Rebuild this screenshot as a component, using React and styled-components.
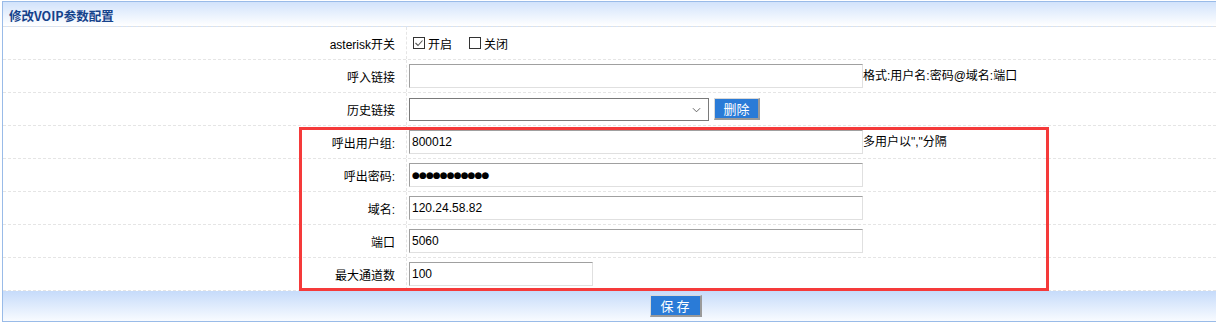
import { useState } from "react";
import styled, { createGlobalStyle } from "styled-components";

const GlobalStyle = createGlobalStyle`
    body {
        margin: 0;
        overflow: hidden;
        background: #fff;
        font-family: "Liberation Sans", "Noto Sans CJK SC", sans-serif;
        font-size: 12px;
        color: #000;
    }
`;

const App = () => {
    const [enabled, setEnabled] = useState(true);

    return (
        <>
            <GlobalStyle />
            <Panel>
                <Header>修改VOIP参数配置</Header>

                <Row>
                    <Label>asterisk开关</Label>
                    <Cell>
                        <Check onClick={() => setEnabled(true)}>
                            <Box>{enabled && <Tick />}</Box>开启
                        </Check>
                        <Check onClick={() => setEnabled(false)}>
                            <Box>{!enabled && <Tick />}</Box>关闭
                        </Check>
                    </Cell>
                </Row>

                <Row>
                    <Label>呼入链接</Label>
                    <Cell>
                        <TextInput $w={454} defaultValue="" />
                        <Note>格式:用户名:密码@域名:端口</Note>
                    </Cell>
                </Row>

                <Row>
                    <Label>历史链接</Label>
                    <Cell>
                        <SelectWrap>
                            <Select defaultValue="">
                                <option value=""></option>
                            </Select>
                            <Chevron viewBox="0 0 10 6">
                                <path d="M1 1l4 4 4-4" />
                            </Chevron>
                        </SelectWrap>
                        <BlueButton $w={46}>删除</BlueButton>
                    </Cell>
                </Row>

                <Row>
                    <Label>呼出用户组:</Label>
                    <Cell>
                        <TextInput $w={454} defaultValue="800012" />
                        <Note>多用户以","分隔</Note>
                    </Cell>
                </Row>

                <Row>
                    <Label>呼出密码:</Label>
                    <Cell>
                        <TextInput $w={454} $dots readOnly value="●●●●●●●●●●●" />
                    </Cell>
                </Row>

                <Row>
                    <Label>域名:</Label>
                    <Cell>
                        <TextInput $w={454} defaultValue="120.24.58.82" />
                    </Cell>
                </Row>

                <Row>
                    <Label>端口</Label>
                    <Cell>
                        <TextInput $w={454} defaultValue="5060" />
                    </Cell>
                </Row>

                <Row>
                    <Label>最大通道数</Label>
                    <Cell>
                        <TextInput $w={184} defaultValue="100" />
                    </Cell>
                </Row>

                <Footer>
                    <BlueButton $w={52}>保 存</BlueButton>
                </Footer>

                <Highlight />
            </Panel>
        </>
    );
};

export default App;

const Tick = () => (
    <svg width="10" height="10" viewBox="0 0 10 10">
        <path d="M1.5 5l2.5 2.5 4.5-5" fill="none" stroke="#555" strokeWidth="1.1" />
    </svg>
);

const Panel = styled.div`
    position: relative;
    margin: 1px 0 0 2px;
    border: 1px solid #99bbe8;
    border-right: none;
`;

const Header = styled.div`
    height: 25px;
    padding: 2px 0 0 6px;
    box-sizing: border-box;
    line-height: 23px;
    background: linear-gradient(#d2e3fb, #ffffff);
    border-bottom: 1px dashed #e2e2e2;
    color: #15428b;
    font-weight: bold;
    font-size: 12.5px;
    font-family: "Noto Sans CJK SC", "Liberation Sans", sans-serif;
`;

const Row = styled.div`
    display: grid;
    grid-template-columns: 404px 1fr;
    height: 32px;
    border-bottom: 1px dashed #e5e5e5;
`;

const Label = styled.div`
    display: flex;
    align-items: center;
    justify-content: flex-end;
    padding-right: 11px;
    border-right: 1px dashed #e5e5e5;
    color: #000;
`;

const Cell = styled.div`
    display: flex;
    align-items: center;
    padding-left: 2px;
`;

const Check = styled.label`
    display: flex;
    align-items: center;
    margin: 0 13px 0 4px;
    cursor: pointer;
`;

const Box = styled.span`
    display: flex;
    align-items: center;
    justify-content: center;
    width: 12px;
    height: 12px;
    box-sizing: border-box;
    border: 1px solid #333;
    margin-right: 3px;
    background: #fff;
`;

const TextInput = styled.input`
    width: ${({ $w }) => $w}px;
    height: 24px;
    box-sizing: border-box;
    border: 1px solid;
    border-color: #a0a0a0 #e0e0e0 #e0e0e0 #a0a0a0;
    padding: 0 2px;
    outline: none;
    color: #000;
    font-family: ${({ $dots }) => ($dots ? `"DejaVu Sans", sans-serif` : `"Liberation Sans", sans-serif`)};
    font-size: ${({ $dots }) => ($dots ? "9px" : "12px")};
    letter-spacing: ${({ $dots }) => ($dots ? "-0.9px" : "0")};
`;

const Note = styled.span`
    align-self: flex-start;
    margin-top: 6px;
    white-space: nowrap;
`;

const SelectWrap = styled.div`
    position: relative;
    width: 300px;
    height: 23px;
`;

const Select = styled.select`
    appearance: none;
    width: 100%;
    height: 100%;
    box-sizing: border-box;
    border: 1px solid #7a7a7a;
    background: #fff;
    outline: none;
`;

const Chevron = styled.svg`
    position: absolute;
    right: 8px;
    top: 9px;
    width: 9px;
    height: 6px;
    fill: none;
    stroke: #555;
    stroke-width: 1;
    pointer-events: none;
`;

const BlueButton = styled.button`
    width: ${({ $w }) => $w}px;
    height: 22px;
    margin-left: 5px;
    padding: 0;
    box-sizing: border-box;
    border: 1px solid;
    border-width: 1px 2px 2px 1px;
    border-color: #d8d8d8 #9a9a9a #9a9a9a #d8d8d8;
    background: #2a7bd7;
    color: #fff;
    font-family: "Noto Sans CJK SC", sans-serif;
    font-size: 13px;
    line-height: 18px;
    cursor: pointer;
`;

/* the full panel is wider than the frame; the button sits at its centre */
const Footer = styled.div`
    display: flex;
    justify-content: center;
    align-items: center;
    height: 30px;
    padding-left: 132px;
    background: linear-gradient(#c6dbfa, #f8fbff);

    button {
        margin-left: 0;
    }
`;

const Highlight = styled.div`
    position: absolute;
    left: 296px;
    top: 125px;
    width: 750px;
    height: 164px;
    box-sizing: border-box;
    border: 3px solid #f53a3a;
    pointer-events: none;
`;
